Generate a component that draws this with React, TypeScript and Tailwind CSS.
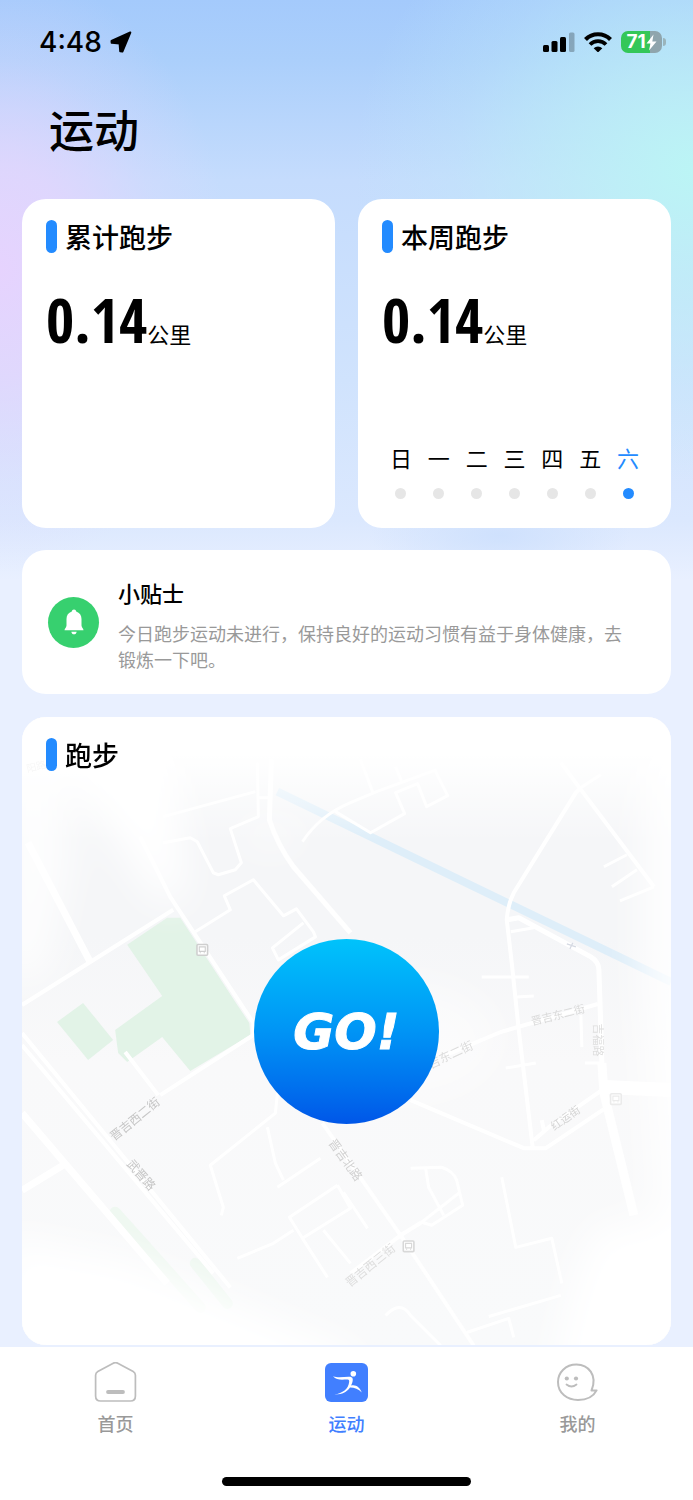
import React from "react";

const WEEK = ["日", "一", "二", "三", "四", "五", "六"];
const TODAY = 6;

function StatusBar() {
  return (
    <div className="flex h-[84px] items-center justify-between pr-[27px] pl-[39px]">
      <div className="flex items-center gap-2">
        <span className="font-['Inter',sans-serif] text-[28px] leading-8 font-medium">4:48</span>
        <svg className="h-[22px] w-[22px]" viewBox="0 0 22 22" aria-hidden="true">
          <path
            d="M20.300 1.500L1.500 9.800L1.700 11.800L9.600 12.400L10.200 20.200L12.400 20.500Z"
            stroke="#000"
            strokeWidth="2"
            strokeLinejoin="round"
          />
        </svg>
      </div>
      <div className="flex items-center gap-[9px]">
        <svg className="h-5 w-8" viewBox="0 0 32 20" aria-hidden="true">
          <rect x="0" y="13" width="6" height="7" rx="1.500" />
          <rect x="8.500" y="9" width="6" height="11" rx="1.500" />
          <rect x="17" y="5" width="6" height="15" rx="1.500" />
          <rect x="26" y="0.500" width="5.500" height="19.500" rx="1.500" opacity=".25" />
        </svg>
        <svg className="h-5 w-7" viewBox="0 0 28 20" aria-hidden="true" fill="none" stroke="#000" strokeWidth="4.200">
          <path d="M1.500 7.400a17.700 17.700 0 0 1 25 0" />
          <path d="M6 12.500a11.300 11.300 0 0 1 16 0" strokeWidth="3.800" />
          <path d="M9.700 16.200a6.200 6.200 0 0 1 8.600 0L14 20.500z" fill="#000" stroke="none" />
        </svg>
        <div className="flex items-center gap-px">
          <div className="flex h-[22px] w-[41px] items-center justify-center rounded-[7px] bg-linear-to-r from-[#34c759] from-70% to-[#8fa5ad] to-70%">
            <span className="font-['Inter',sans-serif] text-[19px] leading-5 font-bold text-white">71</span>
            <svg className="h-[17px] w-[11px]" viewBox="0 0 11 17" fill="#fff" aria-hidden="true">
              <path d="M7.500.5.5 9.500h4L3 16.500l7.500-9H6.300z" />
            </svg>
          </div>
          <div className="h-2 w-[3px] rounded-r-full bg-[#9ab4bb]" />
        </div>
      </div>
    </div>
  );
}

function SectionTitle({ children }: { children: React.ReactNode }) {
  return (
    <div className="flex items-center gap-2">
      <span className="h-[33px] w-[11px] rounded-full bg-[#238bff]" />
      <h2 className="text-[27px] leading-[33px] font-medium">{children}</h2>
    </div>
  );
}

function DistanceCard({ title, children }: { title: string; children?: React.ReactNode }) {
  return (
    <section className="flex min-h-[329px] flex-col rounded-3xl bg-white px-6 pt-[21px] pb-[29px]">
      <SectionTitle>{title}</SectionTitle>
      <p className="mt-[29px] flex items-baseline">
        <span className="font-['Noto_Sans_ExtraCondensed','Open_Sans_Condensed','Roboto_Condensed','Liberation_Sans_Narrow',sans-serif] text-[61px] leading-[76px] font-bold">
          0.14
        </span>
        <span className="text-[22px] leading-8">公里</span>
      </p>
      {children}
    </section>
  );
}

function BusStop({ x, y, color }: { x: number; y: number; color: string }) {
  return (
    <g transform={`translate(${x - 6} ${y - 6})`}>
      <rect x="0.700" y="0.700" width="10.600" height="10.600" rx="1" fill="#fff" stroke={color} strokeWidth="1.600" />
      <path d="M3 3h6v4.500H3zM4 9.300v-1M8 9.300v-1" fill="none" stroke={color} strokeWidth="1.100" />
    </g>
  );
}

function StreetMap() {
  return (
    <svg
      className="absolute inset-0 h-full w-full"
      viewBox="22 717 648 628"
      preserveAspectRatio="xMidYMid slice"
      aria-hidden="true"
    >
      <defs>
        <linearGradient id="land" x1="0" y1="0" x2="0" y2="1">
          <stop offset="0.350" stopColor="#f5f6f8" />
          <stop offset="0.550" stopColor="#f9f9fa" />
          <stop offset="1" stopColor="#f9fafb" />
        </linearGradient>
        <linearGradient id="fadeTop" x1="0" y1="0" x2="0" y2="1">
          <stop offset="0.300" stopColor="#fff" />
          <stop offset="1" stopColor="#fff" stopOpacity="0" />
        </linearGradient>
        <filter id="haze" x="-50%" y="-50%" width="200%" height="200%">
          <feGaussianBlur stdDeviation="20" />
        </filter>
      </defs>
      <rect x="22" y="717" width="648" height="628" fill="url(#land)" />
      <g fill="#e2f3e7">
        <path d="M127 945l40-27h13l57 87 12 18 1 12-60 36-28-34-35 25-9-9-3-23 47-34z" />
        <path d="M57 1022l26-19 30 37-25 20z" />
      </g>
      <path d="M115 1212l45 50 40 45M195 1263l32 40" stroke="#eff8f1" strokeWidth="11" strokeLinecap="round" fill="none" />
      <path d="M277 792l393 190" stroke="#deeef9" strokeWidth="8" fill="none" />
      <g fill="none" stroke="#fff" strokeWidth="3" strokeLinejoin="round">
        <path d="M163 817l92-25M257 763l1 54-28 12 11 34-6 7-17 5-5-2-16-31-7-4-27 5M258 798h11" />
        <path d="M302 842q17-26 48-39l26-11 60-22M335 812l35 21 34-19-9-21 22-9 9 23 21-11-12-24M360 760l12 32M395 767l6 15" />
        <path d="M195 932l35-22-6-14 29-16 30 36 13-7 17 23 2 5-37 23-6-12 31-25" />
        <path d="M277 1093l-2 20-65 52 13 42-2 8M267 1127l8 36 8 17M277 1187l43-29" />
        <path d="M237 1258l36-15 20-13M343 1192l24 36M337 1185l-48 32 13 21 48-30-13-23M302 1238l25 39M323 1230l27 33" />
        <path d="M410 1168l31-1q12 4 15 13l6 25-31 20-10-3 37-29M425 1168l3 19 15 28" />
        <path d="M501 1177l14 70 36-9 10 45M488 1316l72-21M466 1332l42-14 5 19M385 1315q15-16 25 0l30 30" />
        <path d="M603 867l23-12M611 887l25-17M619 901l34-14M600 775l-20 13M481 977h47M516 997l17-1M510 932l23-4M505 1068l30-5M580 1015l1 32M584 1063h17" />
      </g>
      <g fill="none" stroke="#fff" strokeWidth="4" strokeLinejoin="round">
        <path d="M22 1005l151-95M140 837l30 60 83 126v12l-93 60M125 1052l33 43" />
        <path d="M271 760l-2 60q8 25 24 47l57 66" strokeWidth="5" />
        <path d="M22 1045l191 228M22 1033l208 254" />
        <path d="M322 1123l78 112 73 110M421 1222l-21 13-50 38" />
        <path d="M560 763l20 27 73 97M580 788l-5 5-62 100q-6 12-7 27l5 43 7 67 14 118" />
        <path d="M506 920l12-2 72 39q8 5 8 13l1 30 2 63" strokeWidth="5" />
        <path d="M410 1100l113 48h22l58-39M533 1140l15-13 53-37M541 1120l2 10M445 1055l55-23 97-28" />
      </g>
      <g fill="none" stroke="#fff">
        <path d="M28 843l62 119M22 1113l145 170M22 1190l41-25" strokeWidth="7" />
        <path d="M601 1063l2 30 30 122" strokeWidth="9" />
        <path d="M603 1087l67 3" strokeWidth="14" />
      </g>
      <path d="M566 944l9 3M572 943l-3 6" stroke="#d5d9e2" strokeWidth="1.200" />
      <rect x="22" y="717" width="648" height="125" fill="url(#fadeTop)" />
      <g fill="#fff" filter="url(#haze)">
        <path d="M40 720l135 20 10 165-30-5-50-80z" />
        <path d="M0 730h60l10 130-25 120H0z" opacity=".8" />
        <path d="M0 1235l130 25 110 45 120 50v80H0z" />
        <path d="M545 1400l25-110 25-65 130-5v180z" />
        <path d="M640 740l80 0v560h-60l-20-300z" opacity=".85" />
        <ellipse cx="270" cy="835" rx="35" ry="18" opacity=".5" />
        <ellipse cx="400" cy="1040" rx="100" ry="60" opacity=".45" />
      </g>
      <g className="font-['Noto_Sans_CJK_SC',sans-serif]" fontSize="12" fill="#c6c6c6" textAnchor="middle" dominantBaseline="central">
        <text transform="translate(134 1118) rotate(-39)">晋吉西二街</text>
        <text transform="translate(142 1174) rotate(49)">武晋路</text>
        <text transform="translate(346 1159) rotate(54)" fill="#d0d0d0">晋吉北路</text>
        <text transform="translate(369 1264) rotate(-39)" fill="#dedede">晋吉西三街</text>
        <text transform="translate(444 1056) rotate(-25)" fill="#dcdcdc">晋吉东二街</text>
        <text transform="translate(557 1014) rotate(-14)" fontSize="11" fill="#dadada">晋吉东二街</text>
        <text transform="translate(598 1040) rotate(90)" fontSize="11" fill="#dedede">吉福路</text>
        <text transform="translate(564 1117) rotate(-35)" fontSize="11" fill="#d4d4d4">红运街</text>
        <text transform="translate(36 766) rotate(-14)" fontSize="10" fill="#f7f7f7">阳路</text>
      </g>
      <BusStop x={202} y={950} color="#cfcfcf" />
      <BusStop x={408} y={1246} color="#d8d8d8" />
      <BusStop x={615} y={1099} color="#ebebeb" />
    </svg>
  );
}

function HomeIcon() {
  return (
    <svg className="h-10 w-[43px]" viewBox="0 0 43 40" fill="none" stroke="#bdbdbd" aria-hidden="true">
      <path
        d="M18.800 1.400q2.700-1.500 5.400 0l15 8.100q2.200 1.300 2.200 3.800V34q0 5-5 5H6.600q-5 0-5-5V13.300q0-2.500 2.200-3.800z"
        strokeWidth="1.700"
      />
      <path d="M14 30h15" strokeWidth="3.800" strokeLinecap="round" />
    </svg>
  );
}

function SportIcon() {
  return (
    <svg className="h-10 w-[43px]" viewBox="0 0 43 40" aria-hidden="true">
      <rect y="1" width="43" height="39" rx="6" fill="#417fff" />
      <circle cx="28.300" cy="11.800" r="2.800" fill="#fff" />
      <path
        d="M8 14.300c6 2.200 11 .3 16.500.5 3 .1 3.700 2 3.100 4.500-.4 1.700-.8 2.800-1.600 4.300 4.800-1.200 8.800 1.600 10.800 7-3.300-3.600-7.200-5-11.800-5-3.500 5-8.500 7.200-15.500 6.900 8-1.300 14-5.500 14.700-12.800.1-1.600-.6-2.100-2.200-2.100-5 .2-10.500 1-14-3.300z"
        fill="#fff"
      />
    </svg>
  );
}

function MeIcon() {
  return (
    <svg className="h-10 w-[43px]" viewBox="0 0 43 40" fill="none" stroke="#bdbdbd" strokeWidth="2" aria-hidden="true">
      <path d="M35.500 28.500C42 13 32 2.500 20.500 2.500 9.500 2.500 2 10.500 2 20c0 11.500 9.500 18 20 18 9 0 15.500-3.500 18.600-9.600z" strokeLinejoin="round" />
      <circle cx="10.800" cy="16.500" r="2.100" fill="#bdbdbd" stroke="none" />
      <circle cx="20" cy="16.500" r="2.100" fill="#bdbdbd" stroke="none" />
      <path d="M10.500 22.500q5 4 10 0" strokeWidth="1.800" strokeLinecap="round" />
    </svg>
  );
}

const TABS = [
  { label: "首页", Icon: HomeIcon, active: false },
  { label: "运动", Icon: SportIcon, active: true },
  { label: "我的", Icon: MeIcon, active: false },
];

function TabBar() {
  return (
    <footer className="mt-0.5 bg-white">
      <nav className="grid grid-cols-3 pt-[15px]">
        {TABS.map(({ label, Icon, active }) => (
          <a
            key={label}
            href="#"
            aria-current={active ? "page" : undefined}
            className={
              active
                ? "flex flex-col items-center gap-[9px] text-[#417fff]"
                : "flex flex-col items-center gap-[9px] text-[#999]"
            }
          >
            <Icon />
            <span className="text-lg leading-6 font-medium">{label}</span>
          </a>
        ))}
      </nav>
      <div className="mx-auto mt-[42px] mb-[14px] h-[9px] w-[36%] rounded-full bg-black" />
    </footer>
  );
}

export default function App() {
  return (
    <div className="flex min-h-screen flex-col bg-[#e9f0ff] bg-[radial-gradient(ellipse_230px_300px_at_0px_270px,#e6d3fe,#e4d5fdcc_35%,#e0d8fd4d_70%,#dfd8fd00),radial-gradient(ellipse_340px_310px_at_100%_170px,#bbf5f5,#bdf0f6b3_35%,#bfeaf94d_70%,#bfe8fb00),radial-gradient(ellipse_130px_50px_at_500px_535px,#cfe1fd,#d4e4fd00),linear-gradient(#a4cafc_0px,#abcffb_60px,#c5dcfd_180px,#d0e3fd_380px,#dbe8fe_520px,#e9f0ff_580px)] bg-no-repeat font-['Noto_Sans_CJK_SC',sans-serif] text-black">
      <StatusBar />
      <main className="flex flex-1 flex-col px-[22px]">
        <h1 className="mt-[13px] mb-[38px] ml-[27px] text-[45px] leading-[64px] font-medium">运动</h1>
        <div className="grid grid-cols-2 gap-[23px]">
          <DistanceCard title="累计跑步" />
          <DistanceCard title="本周跑步">
            <ul className="mt-auto grid grid-cols-7">
              {WEEK.map((day, i) => (
                <li key={day} className="flex flex-col items-center gap-4">
                  <span className={i === TODAY ? "text-[22px] leading-[30px] text-[#238bff]" : "text-[22px] leading-[30px]"}>
                    {day}
                  </span>
                  <span className={i === TODAY ? "size-[11px] rounded-full bg-[#238bff]" : "size-[11px] rounded-full bg-[#e6e6e6]"} />
                </li>
              ))}
            </ul>
          </DistanceCard>
        </div>
        <section className="mt-[22px] flex items-center gap-[19px] rounded-3xl bg-white py-[18px] pr-8 pl-[26px]">
          <div className="flex size-[51px] shrink-0 items-center justify-center rounded-full bg-[#37d06f]">
            <svg className="h-[26px] w-5" viewBox="0 0 20 26" fill="#fff" aria-hidden="true">
              <path d="M10 .5c1.300 0 2 .8 2.200 1.900C15.700 3.500 17.500 6.300 17.500 10v6.500c0 2 2 3 2 4.700H.5c0-1.700 2-2.700 2-4.700V10c0-3.700 1.800-6.500 5.300-7.600C8 1.300 8.700.5 10 .5z" />
              <path d="M7.300 22.700h5.400c-.3 1.700-1.300 2.600-2.700 2.600s-2.400-.9-2.700-2.600z" />
            </svg>
          </div>
          <div className="flex flex-col gap-[13px] pt-[9px] pb-1">
            <h2 className="text-[22px] leading-[30px] font-medium">小贴士</h2>
            <p className="text-lg leading-[26px] text-[#999]">
              今日跑步运动未进行，保持良好的运动习惯有益于身体健康，去锻炼一下吧。
            </p>
          </div>
        </section>
        <section className="relative mt-[23px] flex min-h-[628px] flex-1 flex-col overflow-hidden rounded-3xl bg-white">
          <StreetMap />
          <div className="relative px-6 pt-[21px]">
            <SectionTitle>跑步</SectionTitle>
          </div>
          <div className="relative flex flex-1 justify-center pt-[168px]">
            <button
              type="button"
              className="size-[185px] rounded-full bg-linear-to-b from-[#00c3fb] via-[#0094f5] to-[#0056e8] font-['DejaVu_Sans',sans-serif] text-[50px] leading-none font-bold text-white italic [-webkit-text-stroke:1px_white]"
            >
              GO!
            </button>
          </div>
        </section>
      </main>
      <TabBar />
    </div>
  );
}
